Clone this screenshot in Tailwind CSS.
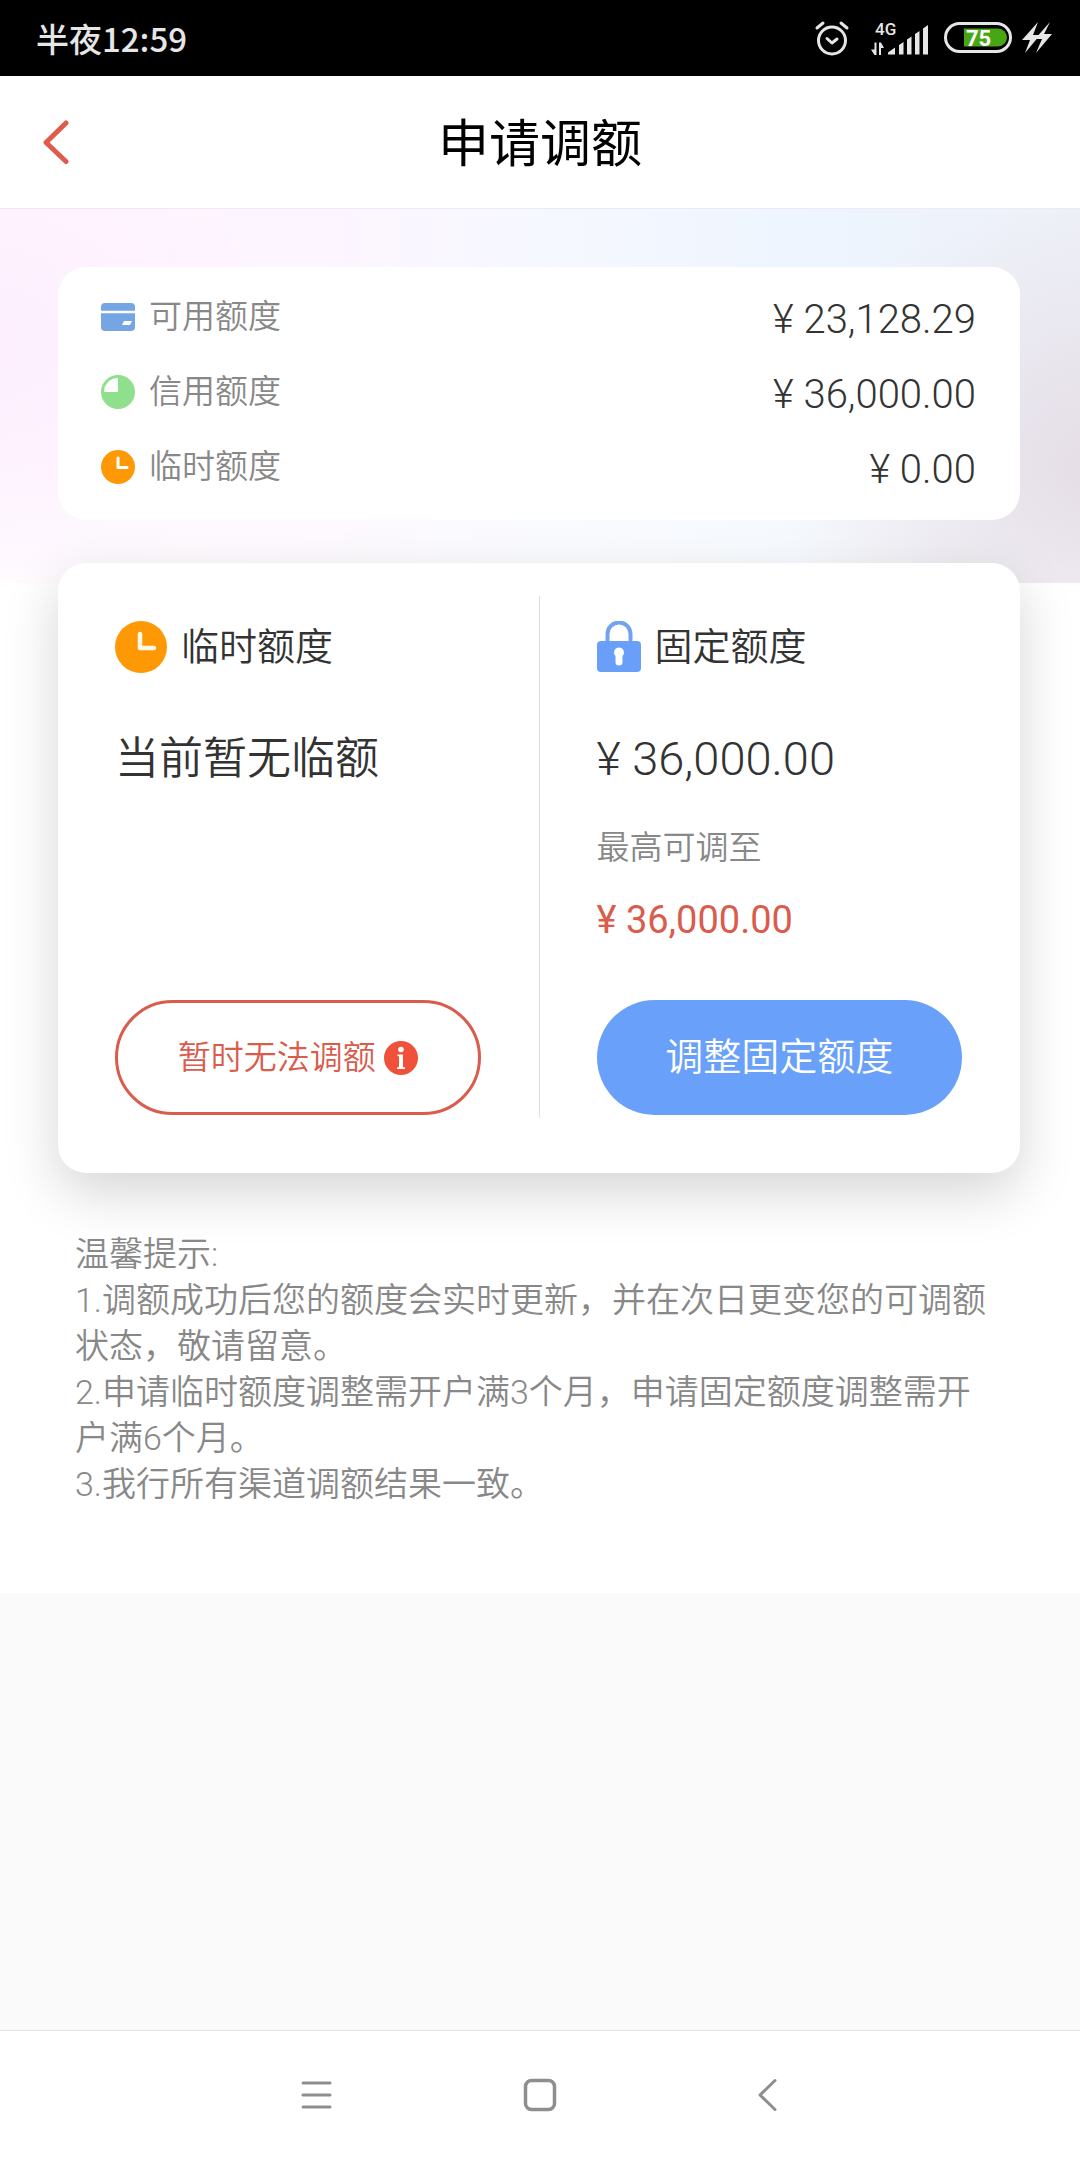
<!DOCTYPE html>
<html lang="zh-CN">
<head>
<meta charset="utf-8">
<meta name="viewport" content="width=device-width, initial-scale=1">
<title>申请调额</title>
<script src="https://cdn.jsdelivr.net/npm/@tailwindcss/browser@4"></script>
</head>
<body class="flex min-h-screen flex-col bg-[#fafafa] font-['Roboto','Noto_Sans_CJK_SC',sans-serif] text-[#333]">

  <!-- System status bar -->
  <div class="flex h-[76px] items-center justify-between bg-black pr-[28px] pl-[36px] text-[#e6e6e6]">
    <span class="font-['Noto_Sans_CJK_SC',sans-serif] text-[33px] leading-[40px] font-medium">半夜12:59</span>
    <div class="flex items-center">
      <svg class="mr-[20px] h-[36px] w-[36px]" viewBox="0 0 36 36" fill="none" stroke="#e6e6e6" stroke-width="3" stroke-linecap="round" stroke-linejoin="round" aria-label="闹钟">
        <circle cx="18" cy="20.5" r="13.5"/><path d="M13 18.500l5 4.500 5-4M3 8l6-5M33 8l-6-5"/>
      </svg>
      <svg class="mr-[16px] h-[36px] w-[58px]" viewBox="0 0 58 36" fill="#e6e6e6" aria-label="信号">
        <text x="5" y="15" font-family="Roboto" font-size="17" font-weight="500">4G</text>
        <path d="M4.500 22.500h2V35h-2L1 29.500h3.500zM9 35V22.500h2l3 5.500h-3v7z"/>
        <path d="M18 34.500v-2l7-5v7zM29 34.500V25l4.500-3v12.500zM37 34.500V19.500l4.500-3v18zM45 34.500V14l4.500-3v23.500zM53 34.500V8.500L58 5v29.500z"/>
      </svg>
      <svg class="mr-[10px] h-[32px] w-[68px]" viewBox="0 0 68 32" aria-label="电量">
        <rect x="1.500" y="1.500" width="65" height="28" rx="14" fill="none" stroke="#e6e6e6" stroke-width="3"/>
        <path d="M20 6.500h34a9 9 0 0 1 0 18H20z" fill="#46a614"/>
        <text x="22" y="24" font-family="Roboto" font-size="22" font-weight="700" fill="#fff">75</text>
      </svg>
      <svg class="h-[32px] w-[30px]" viewBox="0 0 30 32" fill="#e6e6e6" aria-label="充电">
        <path d="M16 0L0 18h8L3 31l15-18h-7zM28 0L13 17h7l-6 14 16-19h-8z"/>
      </svg>
    </div>
  </div>

  <!-- Page header -->
  <header class="grid h-[133px] grid-cols-[1fr_auto_1fr] items-center border-b border-[#f0e9f2] bg-white">
    <a href="#" aria-label="返回" class="justify-self-start pl-[42px]">
      <svg class="h-[46px] w-[28px]" viewBox="0 0 28 46" fill="none" stroke="#e15b4c" stroke-width="5" stroke-linecap="round" stroke-linejoin="round"><path d="M24 4L4 23.500 24 42.500"/></svg>
    </a>
    <h1 class="pt-[6px] text-[51px] leading-[60px] text-black">申请调额</h1>
  </header>

  <main class="bg-white pb-[86px]">
    <!-- Limit summary -->
    <section class="bg-[radial-gradient(ellipse_26%_70%_at_0%_36%,#fdeffe_0%,#fdeffe00_100%),radial-gradient(ellipse_30%_75%_at_102%_70%,#e5dde6_0%,#e5dde600_100%),linear-gradient(180deg,#ffffff00_60%,#ffffffb0_100%),linear-gradient(90deg,#fef6ff_0%,#fdf5ff_30%,#f6f8ff_50%,#eef5fe_75%,#eef1f8_100%)] pt-[58px] pr-[60px] pb-[63px] pl-[58px]">
      <dl class="rounded-[28px] bg-white pt-3 pr-[44px] pb-4 pl-[43px]">
        <div class="flex h-[75px] items-center justify-between">
          <dt class="flex items-center gap-[14px] text-[33px] font-[350] text-[#888]">
            <svg class="h-[36px] w-[34px]" viewBox="0 0 34 36"><rect y="4" width="34" height="28" rx="4" fill="#75a5e4"/><path d="M0 13h34" stroke="#fff" stroke-width="2.500"/><path d="M23 22h8l-2 4h-8z" fill="#fff"/></svg>
            可用额度
          </dt>
          <dd class="pt-[6px] text-[40px] font-light">¥ 23,128.29</dd>
        </div>
        <div class="flex h-[75px] items-center justify-between">
          <dt class="flex items-center gap-[14px] text-[33px] font-[350] text-[#888]">
            <svg class="h-[36px] w-[34px]" viewBox="0 0 34 36"><circle cx="17" cy="18" r="17" fill="#8ee08c"/><path d="M17 4v14H3A14 14 0 0 1 17 4z" fill="#fff"/></svg>
            信用额度
          </dt>
          <dd class="pt-[6px] text-[40px] font-light">¥ 36,000.00</dd>
        </div>
        <div class="flex h-[75px] items-center justify-between">
          <dt class="flex items-center gap-[14px] text-[33px] font-[350] text-[#888]">
            <svg class="h-[36px] w-[34px]" viewBox="0 0 34 36"><circle cx="17" cy="18" r="17" fill="#ff9805"/><path d="M17 9v9.500h9" fill="none" stroke="#fff" stroke-width="3" stroke-linecap="round" stroke-linejoin="round"/></svg>
            临时额度
          </dt>
          <dd class="pt-[6px] text-[40px] font-light">¥ 0.00</dd>
        </div>
      </dl>
    </section>

    <!-- Adjustable limits -->
    <section class="relative -mt-5 mr-[60px] ml-[58px] grid min-h-[610px] grid-cols-[1fr_1px_1fr] rounded-[28px] bg-white shadow-[0_19px_54px_rgba(0,0,0,0.17)]">
      <div class="flex flex-col pt-[58px] pr-[58px] pb-[58px] pl-[57px]">
        <h2 class="flex h-[52px] items-center gap-[14px] text-[38px] font-[350]">
          <svg class="h-[52px] w-[52px]" viewBox="0 0 52 52"><circle cx="26" cy="26" r="26" fill="#ff9805"/><path d="M25 13v14h14" fill="none" stroke="#fff8e8" stroke-width="4.500" stroke-linecap="round" stroke-linejoin="round"/></svg>
          临时额度
        </h2>
        <p class="mt-[56px] text-[44px] leading-[60px] font-[350]">当前暂无临额</p>
        <button type="button" class="mt-auto flex h-[115px] items-center justify-center gap-[8px] rounded-full border-3 border-[#d95c4c] text-[33px] font-[350] text-[#d95c4c]">
          暂时无法调额
          <svg class="h-[34px] w-[34px]" viewBox="0 0 34 34"><circle cx="17" cy="17" r="17" fill="#f0513a"/><circle cx="17" cy="8.500" r="2.800" fill="#fff"/><path d="M13.500 13.500H19V26l2 .5V28h-8v-1.500l2-.5V15.500l-1.500-.5z" fill="#fff"/></svg>
        </button>
      </div>
      <div class="mt-[33px] mb-[55px] bg-[#dfdfdf]"></div>
      <div class="flex flex-col pt-[58px] pr-[58px] pb-[58px] pl-[57px]">
        <h2 class="flex h-[52px] items-center gap-[14px] text-[38px] font-[350]">
          <svg class="h-[52px] w-[44px]" viewBox="0 0 44 52"><path d="M10.500 20V13a11.500 11.500 0 0 1 23 0v7" fill="none" stroke="#73a3ee" stroke-width="4"/><rect x="0" y="20" width="44" height="31" rx="4" fill="#6a9ff9"/><path d="M22 26.500a5 5 0 0 1 3.500 8.500V41a3.500 3.500 0 0 1-7 0v-6a5 5 0 0 1 3.500-8.500z" fill="#fff"/></svg>
          固定额度
        </h2>
        <p class="mt-[56px] text-[47px] leading-[60px] font-light">¥ 36,000.00</p>
        <p class="mt-[34px] text-[33px] leading-[50px] font-[350] text-[#888]">最高可调至</p>
        <p class="mt-[22px] text-[38px] leading-[50px] text-[#d95c4c]">¥ 36,000.00</p>
        <button type="button" class="mt-auto h-[115px] rounded-full bg-[#69a1fa] text-[38px] font-[350] text-white">调整固定额度</button>
      </div>
    </section>

    <!-- Notes -->
    <section class="mt-[58px] pr-[80px] pl-[75px] text-[34px] leading-[46px] font-[350] text-[#888]">
      <h2>温馨提示:</h2>
      <p>1.调额成功后您的额度会实时更新，并在次日更变您的可调额状态，敬请留意。</p>
      <p>2.申请临时额度调整需开户满3个月，申请固定额度调整需开户满6个月。</p>
      <p>3.我行所有渠道调额结果一致。</p>
    </section>
  </main>

  <!-- System navigation bar -->
  <nav class="mt-auto flex h-[130px] items-center justify-center gap-[188px] border-t border-[#e2e2e2] bg-white">
    <button type="button" aria-label="最近任务"><svg class="h-[36px] w-[36px]" viewBox="0 0 36 36" stroke="#8e8e8e" stroke-width="3" stroke-linecap="round"><path d="M5 5h27M5 17h27M5 29h27"/></svg></button>
    <button type="button" aria-label="主屏幕"><svg class="h-[36px] w-[36px]" viewBox="0 0 36 36" fill="none" stroke="#8e8e8e" stroke-width="3.500"><rect x="3.500" y="2.500" width="29" height="29" rx="6"/></svg></button>
    <button type="button" aria-label="返回上一页"><svg class="h-[36px] w-[36px]" viewBox="0 0 36 36" fill="none" stroke="#8e8e8e" stroke-width="3" stroke-linecap="round" stroke-linejoin="round"><path d="M29 2.500L14 17l15 14.500"/></svg></button>
  </nav>
</body>
</html>
